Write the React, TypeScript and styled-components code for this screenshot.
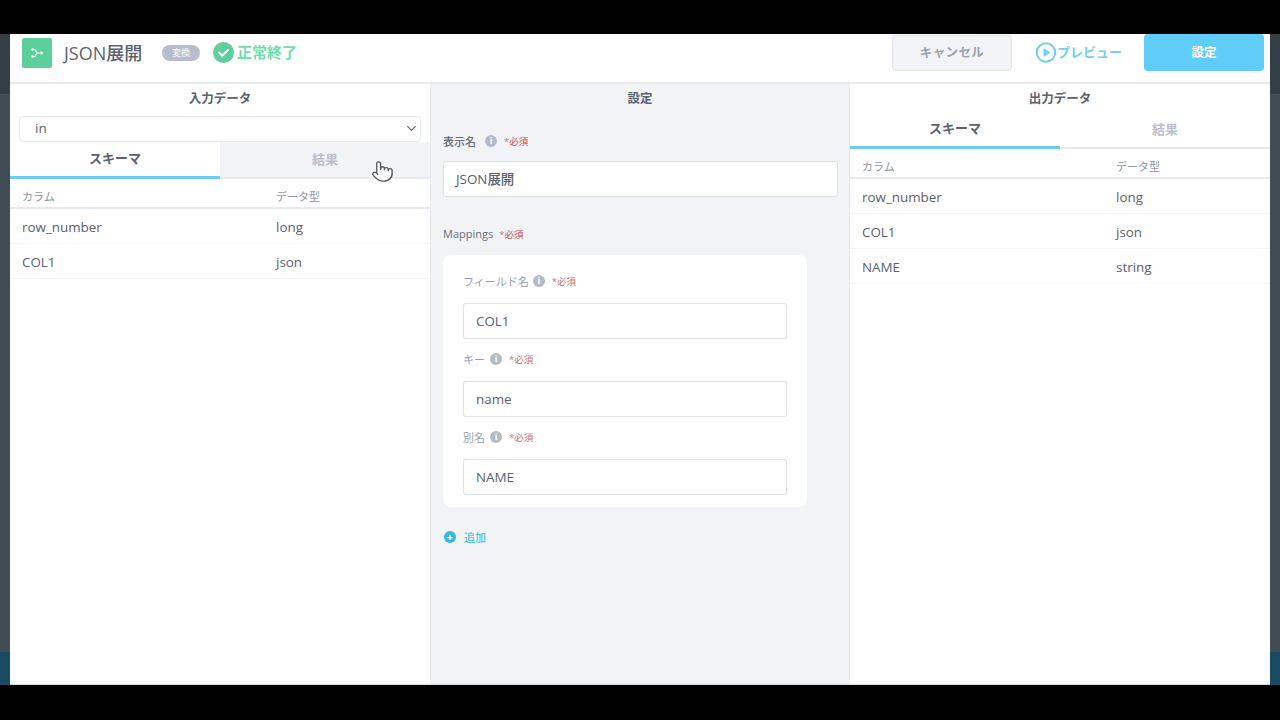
import React from "react";
import styled, { createGlobalStyle } from "styled-components";
import { ChevronDown, Pointer } from "lucide-react";

const Global = createGlobalStyle`
  html, body { margin: 0; padding: 0; background: #000; }
  body { font-family: "Open Sans", "Noto Sans CJK JP", sans-serif; }
  * { box-sizing: border-box; }
`;

const Page = styled.div`
  width: 1280px;
  height: 720px;
  display: flex;
  flex-direction: column;
  background: #000;
  overflow: hidden;
`;
const Letterbox = styled.div<{ $h: number }>`
  height: ${(p) => p.$h}px;
  flex: none;
  background: #000;
`;
const Stage = styled.div`
  height: 651px;
  display: flex;
`;
const Backdrop = styled.div`
  width: 10px;
  flex: none;
  display: flex;
  flex-direction: column;
  background: #3f4c55;
`;
const BackdropTop = styled.div`
  height: 61px;
  flex: none;
  background: #333e46;
  border-bottom: 1px solid #4a565e;
`;
const BackdropMid = styled.div`
  flex: 1;
  background: #414c54;
`;
const BackdropBlue = styled.div`
  height: 33px;
  flex: none;
  background: #1d4a63;
  border-bottom: 1px solid #1d4a63;
`;
const Modal = styled.div`
  width: 1260px;
  flex: none;
  background: #fff;
  display: flex;
  flex-direction: column;
  border-bottom: 1px solid #d5d8dc;
`;
const Header = styled.header`
  height: 50px;
  flex: none;
  display: flex;
  align-items: flex-start;
  padding-left: 12px;
  padding-right: 6px;
  border-bottom: 2px solid #e6e9ef;
`;
const NodeIcon = styled.div`
  width: 30px;
  height: 30px;
  margin-top: 4px;
  background: #5ccf9b;
  border-radius: 2px;
  display: flex;
  align-items: center;
  justify-content: center;
  flex: none;
`;
const Title = styled.h1`
  margin: 6px 0 0 12px;
  font-size: 18px;
  line-height: 27px;
  font-weight: 500;
  color: #5b6372;
  width: 98px;
  flex: none;
`;
const TypeBadge = styled.span`
  margin-top: 11px;
  width: 38px;
  height: 16px;
  border-radius: 8px;
  background: #b6bdcc;
  color: #fff;
  font-size: 9px;
  line-height: 16px;
  text-align: center;
  flex: none;
`;
const StatusIcon = styled.svg`
  margin: 8px 0 0 13px;
  flex: none;
`;
const StatusText = styled.span`
  margin: 6px 0 0 3px;
  font-size: 15px;
  line-height: 24px;
  font-weight: 700;
  color: #72dcaa;
  flex: 1;
`;
const CancelButton = styled.button`
  width: 120px;
  height: 36px;
  margin-top: 1px;
  padding: 0 0 3px;
  border: 1px solid #e0e3e9;
  border-radius: 4px;
  background: #f2f3f6;
  color: #9ba3b0;
  font: 700 12.5px "Open Sans", "Noto Sans CJK JP", sans-serif;
  letter-spacing: 0.4px;
`;
const PreviewButton = styled.div`
  width: 132px;
  display: flex;
  align-items: center;
  justify-content: flex-start;
  padding-left: 23px;
  margin-top: 8px;
  color: #71cff2;
  font-size: 13px;
  line-height: 21px;
  font-weight: 700;
`;
const SubmitButton = styled.button`
  width: 120px;
  height: 37px;
  padding: 0 0 2px;
  border: 0;
  border-radius: 4px;
  background: #60cdf9;
  color: #fff;
  font: 700 12.5px "Open Sans", "Noto Sans CJK JP", sans-serif;
`;
const Columns = styled.div`
  flex: 1;
  display: grid;
  grid-template-columns: 420px 420px 420px;
  min-height: 0;
`;
const Column = styled.section`
  position: relative;
  display: flex;
  flex-direction: column;
  min-height: 0;
`;
const CenterColumn = styled(Column)`
  background: #f1f3f7;
  border-left: 1px solid #e6e9ef;
  border-right: 1px solid #e6e9ef;
  padding: 0 12px;
`;
const ColumnTitle = styled.h2`
  margin: 0;
  height: 29px;
  font-size: 12.5px;
  line-height: 29px;
  font-weight: 600;
  text-align: center;
  color: #5a6270;
`;
const SelectBox = styled.div`
  height: 26px;
  margin: 3px 9px 0;
  padding: 0 1px 2px 15px;
  background: #fff;
  border: 1px solid #e6e9ef;
  border-radius: 4px;
  display: flex;
  align-items: center;
  justify-content: space-between;
  font-size: 13.5px;
  font-weight: 500;
  color: #5a6270;
`;
const Tabs = styled.div<{ $top?: number }>`
  display: grid;
  grid-template-columns: 210px 210px;
  height: 37px;
  flex: none;
  margin-top: ${(p) => p.$top ?? 0}px;
  border-bottom: 2px solid #e6e9ef;
`;
const Tab = styled.div<{ $active?: boolean; $muted?: boolean }>`
  font-size: 13px;
  font-weight: 700;
  display: flex;
  align-items: center;
  justify-content: center;
  padding-bottom: 3px;
  margin-bottom: ${(p) => (p.$active ? "-2px" : "0")};
  border-bottom: ${(p) => (p.$active ? "3px solid #6dcdf0" : "0")};
  color: ${(p) => (p.$active ? "#5a6270" : "#b9c0cc")};
  background: ${(p) => (p.$muted ? "#f1f3f7" : "transparent")};
`;
const RowGrid = styled.div`
  display: grid;
  grid-template-columns: 254px 1fr;
  padding: 0 12px;
  align-items: center;
`;
const TableHead = styled(RowGrid)`
  height: 30px;
  flex: none;
  padding-top: 5px;
  border-bottom: 2px solid #e6e9ef;
  font-size: 11px;
  color: #8d95a2;
`;
const TableRow = styled(RowGrid)`
  height: 35px;
  flex: none;
  padding-top: 1px;
  border-bottom: 1px solid #f4f5f8;
  font-size: 13.4px;
  font-weight: 500;
  color: #596170;
`;
const Cursor = styled.div`
  position: absolute;
  left: 361px;
  top: 76px;
  color: #55585c;
  line-height: 0;
`;
const LabelRow = styled.div<{ $top: number; $light?: boolean }>`
  display: flex;
  align-items: center;
  height: 16px;
  padding-bottom: 1px;
  margin-top: ${(p) => p.$top}px;
  font-size: 11px;
  font-weight: ${(p) => (p.$light ? 400 : 500)};
  color: ${(p) => (p.$light ? "#98a0ad" : "#666e7b")};
`;
const InfoDot = styled.span<{ $gapL: number }>`
  width: 12px;
  height: 12px;
  border-radius: 50%;
  background: #b3bac9;
  color: #fff;
  margin-left: ${(p) => p.$gapL}px;
  font-size: 9px;
  line-height: 12px;
  font-weight: 700;
  text-align: center;
  flex: none;
`;
const Required = styled.span<{ $gapL: number }>`
  margin-left: ${(p) => p.$gapL}px;
  font-size: 9.5px;
  color: #c9706c;
`;
const Field = styled.div<{ $top: number }>`
  height: 36px;
  flex: none;
  margin-top: ${(p) => p.$top}px;
  padding: 0 12px;
  background: #fff;
  border: 1px solid #dfe3e8;
  box-shadow: 0 0 1px #e4e7ec;
  border-radius: 3px;
  display: flex;
  align-items: center;
  font-size: 13.4px;
  font-weight: 500;
  color: #596170;
`;
const NameField = styled(Field)`
  width: 395px;
  padding-bottom: 2px;
`;
const Card = styled.div`
  width: 364px;
  height: 252px;
  margin-top: 13px;
  padding: 18px 20px 0;
  background: #fff;
  border-radius: 8px;
`;
const AddRow = styled.div`
  display: flex;
  align-items: center;
  margin-top: 22px;
  height: 16px;
  padding-left: 1px;
  color: #4fbfe6;
  font-size: 11px;
  font-weight: 500;
`;
const AddIcon = styled.span`
  width: 12px;
  height: 12px;
  margin-right: 8px;
  border-radius: 50%;
  background: #35b6e6;
  color: #fff;
  font-size: 11px;
  line-height: 12px;
  font-weight: 700;
  text-align: center;
`;

const Side = () => (
  <Backdrop>
    <BackdropTop />
    <BackdropMid />
    <BackdropBlue />
  </Backdrop>
);

const SchemaRows = ({ rows }: { rows: [string, string][] }) => (
  <>
    <TableHead>
      <span>カラム</span>
      <span>データ型</span>
    </TableHead>
    {rows.map(([a, b]) => (
      <TableRow key={a}>
        <span>{a}</span>
        <span>{b}</span>
      </TableRow>
    ))}
  </>
);

const MapField = ({ label, value, gap, first }: { label: string; value: string; gap: number; first?: boolean }) => (
  <>
    <LabelRow $top={first ? 0 : 12} $light>
      {label}
      <InfoDot $gapL={gap}>i</InfoDot>
      <Required $gapL={7}>*必須</Required>
    </LabelRow>
    <Field $top={14}>{value}</Field>
  </>
);

export default function App() {
  return (
    <Page>
      <Global />
      <Letterbox $h={34} />
      <Stage>
        <Side />
        <Modal>
          <Header>
            <NodeIcon>
              <svg width="12" height="10" viewBox="0 0 12 10" fill="none">
                <circle cx="1.5" cy="1.5" r="1.3" fill="#fff" />
                <circle cx="1.5" cy="8.5" r="1.3" fill="#fff" />
                <circle cx="10.5" cy="5" r="1.4" fill="#fff" />
                <path d="M2 1.5h2L6 5 4 8.5H2M6 5h3.5" stroke="#fff" strokeWidth="1.1" />
              </svg>
            </NodeIcon>
            <Title>JSON展開</Title>
            <TypeBadge>変換</TypeBadge>
            <StatusIcon width="21" height="21" viewBox="0 0 21 21">
              <circle cx="10.5" cy="10.5" r="10.5" fill="#5ccf9b" />
              <path d="M6 10.5l3.2 3.2L15 8" stroke="#fff" strokeWidth="2" fill="none" strokeLinecap="round" strokeLinejoin="round" />
            </StatusIcon>
            <StatusText>正常終了</StatusText>
            <CancelButton>キャンセル</CancelButton>
            <PreviewButton>
              <svg width="22" height="21" viewBox="0 0 22 21" fill="none">
                <circle cx="11" cy="10.5" r="9.3" stroke="#71cff2" strokeWidth="2" />
                <path d="M8.5 6l7 4.5-7 4.5z" fill="#71cff2" />
              </svg>
              プレビュー
            </PreviewButton>
            <SubmitButton>設定</SubmitButton>
          </Header>
          <Columns>
            <Column>
              <ColumnTitle>入力データ</ColumnTitle>
              <SelectBox>
                in
                <ChevronDown size={15} color="#5f6774" />
              </SelectBox>
              <Tabs>
                <Tab $active>スキーマ</Tab>
                <Tab $muted>結果</Tab>
              </Tabs>
              <SchemaRows rows={[["row_number", "long"], ["COL1", "json"]]} />
              <Cursor>
                <Pointer size={23} fill="#fff" strokeWidth={1.4} />
              </Cursor>
            </Column>
            <CenterColumn>
              <ColumnTitle>設定</ColumnTitle>
              <LabelRow $top={20}>
                表示名
                <InfoDot $gapL={9}>i</InfoDot>
                <Required $gapL={7}>*必須</Required>
              </LabelRow>
              <NameField $top={12}>JSON展開</NameField>
              <LabelRow $top={29}>
                Mappings
                <Required $gapL={6}>*必須</Required>
              </LabelRow>
              <Card>
                <MapField first label="フィールド名" value="COL1" gap={4} />
                <MapField label="キー" value="name" gap={5} />
                <MapField label="別名" value="NAME" gap={5} />
              </Card>
              <AddRow>
                <AddIcon>+</AddIcon>
                追加
              </AddRow>
            </CenterColumn>
            <Column>
              <ColumnTitle>出力データ</ColumnTitle>
              <Tabs $top={-1}>
                <Tab $active>スキーマ</Tab>
                <Tab>結果</Tab>
              </Tabs>
              <SchemaRows rows={[["row_number", "long"], ["COL1", "json"], ["NAME", "string"]]} />
            </Column>
          </Columns>
        </Modal>
        <Side />
      </Stage>
      <Letterbox $h={35} />
    </Page>
  );
}
